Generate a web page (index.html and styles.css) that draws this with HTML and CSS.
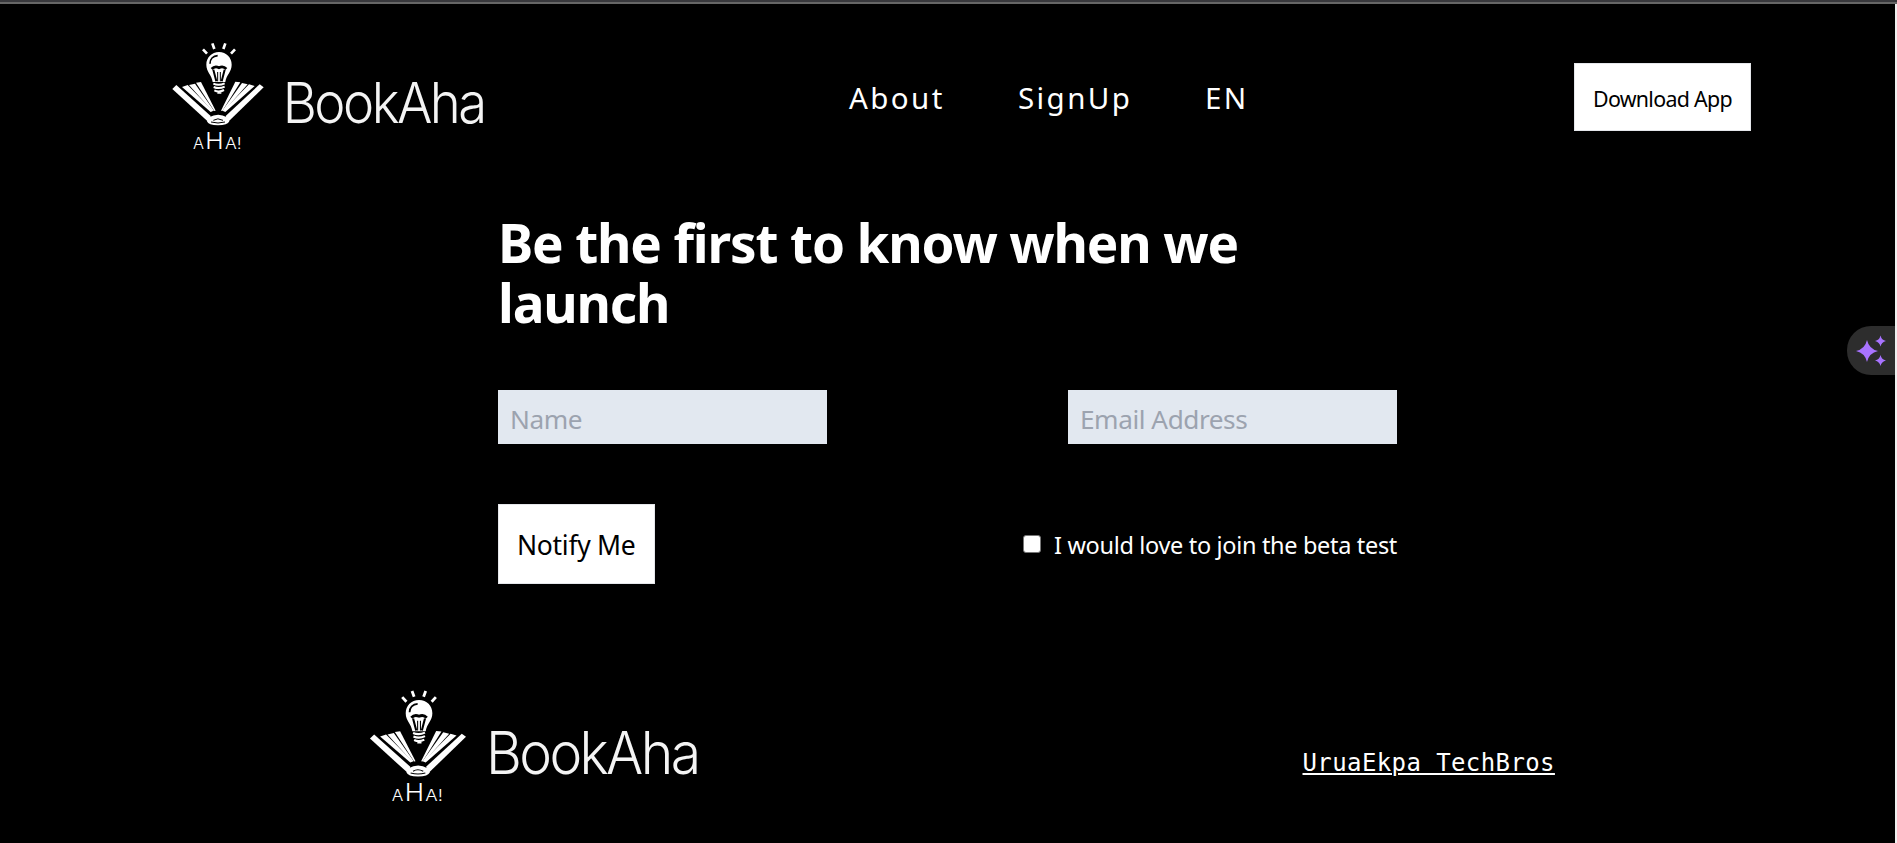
FILE: index.html
```html
<!DOCTYPE html>
<html lang="en">
<head>
<meta charset="utf-8">
<title>BookAha</title>
<link rel="stylesheet" href="styles.css">
</head>
<body>
<svg class="defs" width="0" height="0" aria-hidden="true">
  <symbol id="logo" viewBox="0 0 1020 390" preserveAspectRatio="none">
    <g fill="none" stroke="#fff" stroke-width="8">
      <path d="M129 58l12 13M157 40l6 17M196 40l-6 17M225 58l-12 13"/>
    </g>
    <path fill="#fff" d="M177 66c-22 0-38 17-38 38 0 22 16 30 19 52h38c3-22 19-30 19-52 0-21-16-38-38-38z"/>
    <g fill="none" stroke="#000">
      <path stroke-width="5" d="M150 101c0-13 9-23 23-24"/>
      <path stroke-width="8" d="M155 117q9-10 22-4q13-6 22 4"/>
      <path stroke-width="6" d="M160 119l9 35M194 119l-9 35"/>
      <path stroke-width="3" d="M173 126v28M181 126v28"/>
    </g>
    <path fill="none" stroke="#fff" stroke-width="6" d="M160 161q16 7 34-1M161 171q16 7 33-1M163 181q14 7 29-1M172 188h12"/>
    <g fill="#fff">
      <path d="M37 177l12-12 103 93-6 19z"/>
      <path d="M66 171l17-6 76 78-7 3z"/>
      <path d="M87 165l18-4 57 81-5 1z"/>
      <path d="M108 158l15-2 44 86-4 1z"/>
      <path d="M311 172l-12-9-102 95 7 18z"/>
      <path d="M284 168l-17-5-78 80 7 3z"/>
      <path d="M263 163l-17-4-59 83 5 1z"/>
      <path d="M241 157l-15-2-43 87 4 1z"/>
      <path d="M147 262q28-15 54 0l7 12q-5 12-34 12t-33-12z"/>
    </g>
    <path fill="none" stroke="#000" stroke-width="3" d="M160 271q13-9 29 0M153 276q21 6 42 0"/>
    <g class="logo-caption">
      <text x="99" y="356" font-size="46" textLength="33" lengthAdjust="spacingAndGlyphs">A</text>
      <text x="136" y="356" font-size="70" textLength="55" lengthAdjust="spacingAndGlyphs">H</text>
      <text x="195" y="356" font-size="46" textLength="50" lengthAdjust="spacingAndGlyphs">A!</text>
    </g>
    <text class="logo-name" x="368" y="280" font-size="168" textLength="606" lengthAdjust="spacingAndGlyphs">BookAha</text>
  </symbol>
</svg>
<div class="frame">
  <div class="page">
    <header class="header">
      <svg class="logo"><use href="#logo"/></svg>
      <nav class="nav">
        <a class="nav-about">About</a>
        <a class="nav-signup">SignUp</a>
        <a class="nav-lang">EN</a>
      </nav>
      <button class="btn download"><span>Download App</span></button>
    </header>
    <main class="main">
      <h1 class="title">Be the first to know when we launch</h1>
      <form class="form">
        <div class="row">
          <input class="field name" type="text" placeholder="Name">
          <input class="field email" type="text" placeholder="Email Address">
        </div>
        <div class="row actions">
          <button class="btn notify" type="button"><span>Notify Me</span></button>
          <label class="beta"><i class="box"></i><span>I would love to join the beta test</span></label>
        </div>
      </form>
    </main>
    <footer class="footer">
      <svg class="logo logo-large"><use href="#logo"/></svg>
      <a class="credit">UruaEkpa TechBros</a>
    </footer>
  </div>
  <aside class="assistant">
    <svg width="48" height="48" viewBox="0 0 48 48" fill="#a873ff">
      <path d="M20 14Q22 23 31 25Q22 27 20 36Q18 27 9 25Q18 23 20 14z"/>
      <path d="M33.500 9.500Q34.500 14 39 15Q34.500 16 33.500 20.500Q32.500 16 28 15Q32.500 14 33.500 9.500z"/>
      <path d="M33.500 29Q34.500 33.500 39 34.500Q34.500 35.500 33.500 40Q32.500 35.500 28 34.500Q32.500 33.500 33.500 29z"/>
    </svg>
  </aside>
</div>
</body>
</html>
```
FILE: styles.css
```css
* { box-sizing: border-box; }
body {
  margin: 0;
  background: #000;
  color: #fff;
  font-family: "Noto Sans", "Open Sans", sans-serif;
  overflow: hidden;
}
.defs { position: absolute; }
.frame {
  position: relative;
  height: 843px;
  border-top: 2px solid #38383c;
}
.page {
  height: 841px;
  border-top: 2px solid #666;
  display: flex;
  flex-direction: column;
}
.page::after {
  content: "";
  position: absolute;
  top: 2px;
  right: 0;
  bottom: 0;
  width: 2px;
  background: #efefef;
}
.logo { display: block; width: 340px; height: 130px; flex: none; }
.logo-name { font-family: Inter, sans-serif; font-weight: 300; letter-spacing: -8px; fill: #f4f4f4; }
.logo-caption { font-family: Inter, sans-serif; font-weight: 300; fill: #fff; }
.header {
  display: flex;
  align-items: flex-start;
  height: 156px;
  padding: 26px 146px 0 160px;
}
.nav {
  display: flex;
  margin: 48px auto 0 349px;
  font-size: 29.5px;
  line-height: 40px;
  letter-spacing: 2.4px;
}
.nav a { white-space: nowrap; }
.nav-about { width: 169px; }
.nav-signup { width: 187px; }
.btn {
  border: 1px solid #e5e7eb;
  background: #fff;
  color: #000;
  font-family: inherit;
  padding: 0;
  text-align: left;
  white-space: nowrap;
}
.download {
  width: 177px;
  height: 68px;
  margin-top: 33px;
  padding: 2px 0 0 18px;
  font-size: 21.4px;
  letter-spacing: -0.7px;
}
.main { padding: 53px 500px 0 498px; height: 424px; }
.title {
  width: 800px;
  margin: 0;
  font-size: 53px;
  line-height: 60px;
  font-weight: 700;
  letter-spacing: -1.15px;
}
.form { margin-top: 57px; }
.row { display: flex; justify-content: space-between; width: 899px; }
.field {
  width: 329px;
  height: 54px;
  padding: 3px 0 0 12px;
  border: 0;
  background: #e2e8f0;
  font-family: inherit;
  font-size: 26.2px;
  letter-spacing: -0.45px;
}
.field::placeholder { color: #9ca3af; opacity: 1; }
.actions { margin-top: 60px; }
.notify {
  width: 157px;
  height: 80px;
  padding: 2px 0 0 18px;
  font-size: 26.5px;
  letter-spacing: -0.3px;
}
.beta {
  display: flex;
  height: 80px;
  align-items: center;
  font-size: 23.5px;
  letter-spacing: -0.33px;
  white-space: nowrap;
}
.beta span { padding-top: 2px; }
.box {
  width: 18px;
  height: 18px;
  margin-right: 13px;
  border: 1px solid #767676;
  border-radius: 3px;
  background: #fff;
}
.footer { display: flex; padding: 93px 0 0 357px; }
.logo-large { width: 357.500px; height: 135.700px; }
.credit {
  margin: 72px 0 0 588px;
  font-family: "DejaVu Sans Mono", monospace;
  font-size: 24px;
  letter-spacing: 0.4px;
  line-height: 28px;
  text-decoration: underline 2px;
  text-underline-offset: 2px;
}
.assistant {
  position: absolute;
  top: 324px;
  right: 2px;
  width: 48px;
  height: 49px;
  border-radius: 24px 0 0 24px;
  background: #2d2d2d;
}
```
